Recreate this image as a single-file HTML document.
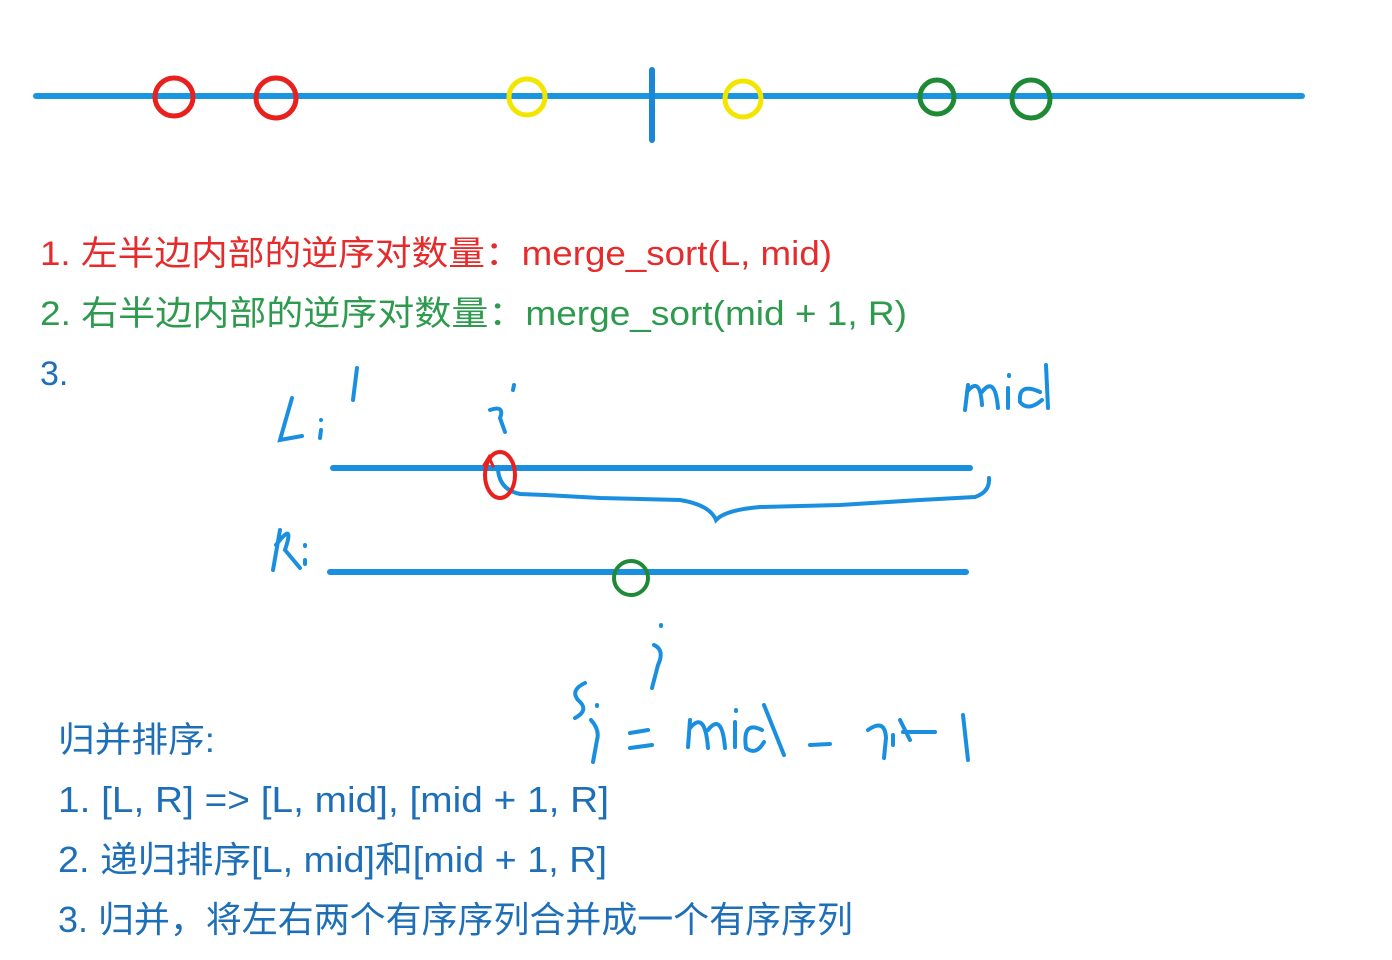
<!DOCTYPE html>
<html><head><meta charset="utf-8"><style>
html,body{margin:0;padding:0;background:#fff;width:1392px;height:960px;overflow:hidden}
svg{position:absolute;left:0;top:0}
.t{font-family:"Liberation Sans","Noto Sans CJK SC",sans-serif}
</style></head><body>
<svg width="1392" height="960" viewBox="0 0 1392 960">
<g stroke-linecap="round" fill="none">
<line x1="36" y1="96" x2="1302" y2="96" stroke="#1a96e0" stroke-width="6"/>
<line x1="652" y1="70" x2="652" y2="140" stroke="#1a86d8" stroke-width="6"/>
<circle cx="174" cy="97" r="19" stroke="#e8201e" stroke-width="5"/>
<circle cx="276" cy="98" r="20" stroke="#e8201e" stroke-width="5"/>
<circle cx="527" cy="97" r="18" stroke="#f2e600" stroke-width="5"/>
<circle cx="743" cy="99" r="18" stroke="#f2e600" stroke-width="5"/>
<circle cx="937" cy="97" r="17" stroke="#1f8a36" stroke-width="5"/>
<circle cx="1031" cy="99" r="19" stroke="#1f8a36" stroke-width="5"/>

<g stroke="#1a8fe0" stroke-width="4">
<line x1="333" y1="468" x2="970" y2="468" stroke-width="6"/>
<line x1="330" y1="572" x2="966" y2="572" stroke-width="6"/>
<path d="M498 470 Q500 490 520 494 L545 495 L600 498 L680 500 Q710 505 716 520 Q725 510 760 507 L840 505 L920 500 L975 497 Q990 492 989 478"/>
<path d="M292 398 L280 440 L302 436"/>
<path d="M321 420 v0 M321 430 L320 438"/>
<path d="M357 368 L353 400"/>
<path d="M490 410 Q505 405 500 418 L505 432 M514 385 l-1 5"/>
<path d="M965 410 L968 385 M967 392 Q980 375 982 405 M982 392 Q995 375 998 408 M1008 388 L1008 408 M1009 375 v1 M1040 392 Q1018 382 1020 402 Q1028 412 1042 400 M1046 365 L1048 408"/>
<path d="M280 530 L273 570 M276 545 Q295 520 285 550 L300 568 M305 545 v1 M305 560 v4"/>
<path d="M661 625 v1 M654 645 Q665 650 658 665 L652 688"/>
<path d="M585 683 Q570 690 578 700 Q590 710 575 718 M597 705 v1 M591 720 Q600 730 597 740 L593 762"/>
<path d="M630 733 L648 730 M630 748 L652 745"/>
<path d="M688 747 L690 720 M690 728 Q705 710 708 748 M708 730 Q722 712 725 748 M735 722 L735 747 M736 710 v1 M762 730 Q742 720 746 748 Q756 756 764 742 M764 705 L784 755"/>
<path d="M810 745 L830 744"/>
<path d="M868 730 Q885 718 886 738 L884 758 M893 735 L893 745 M900 720 L910 740 M903 732 L935 732"/>
<path d="M963 715 L968 760"/>
</g>
<ellipse cx="500" cy="475" rx="15" ry="23" stroke="#e8201e" stroke-width="4"/>
<path d="M484 465 l5 -8 l4 9" stroke="#e8201e" stroke-width="3"/>
<ellipse cx="631" cy="578" rx="17" ry="17" stroke="#1f8a36" stroke-width="4"/>
</g>
<g class="t">
<text x="40" y="265" font-size="34" fill="#e52b2b" textLength="792" lengthAdjust="spacingAndGlyphs">1. 左半边内部的逆序对数量：merge_sort(L, mid)</text>
<text x="40" y="325" font-size="34" fill="#2e9a4e" textLength="867" lengthAdjust="spacingAndGlyphs">2. 右半边内部的逆序对数量：merge_sort(mid + 1, R)</text>
<text x="40" y="385" font-size="34" fill="#1e6fb8">3.</text>
<text x="58" y="752" font-size="35" fill="#1e6fb8" textLength="157" lengthAdjust="spacingAndGlyphs">归并排序:</text>
<text x="58" y="812" font-size="36" fill="#1e6fb8" textLength="551" lengthAdjust="spacingAndGlyphs">1. [L, R] =&gt; [L, mid], [mid + 1, R]</text>
<text x="58" y="872" font-size="36" fill="#1e6fb8" textLength="549" lengthAdjust="spacingAndGlyphs">2. 递归排序[L, mid]和[mid + 1, R]</text>
<text x="58" y="932" font-size="36" fill="#1e6fb8" textLength="795" lengthAdjust="spacingAndGlyphs">3. 归并，将左右两个有序序列合并成一个有序序列</text>
</g>
</svg>
</body></html>
